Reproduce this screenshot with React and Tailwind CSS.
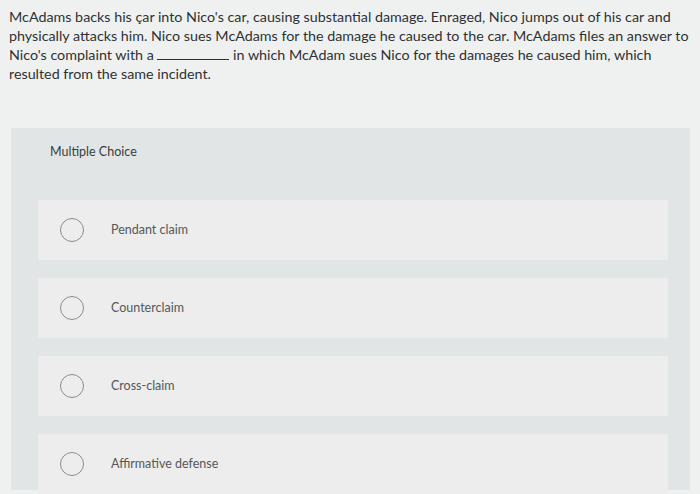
const options = ['Pendant claim', 'Counterclaim', 'Cross-claim', 'Affirmative defense']

export default function App() {
  return (
    <div className="w-[700px] h-[494px] overflow-hidden bg-[#eff1f0] font-['Lato',sans-serif]">
      <div className="pl-[9px] pt-[7px] pb-[45px] text-[14.3px] leading-[19px] text-[#2e3133]">
        <p className="whitespace-nowrap">McAdams backs his çar into Nico's car, causing substantial damage. Enraged, Nico jumps out of his car and</p>
        <p className="whitespace-nowrap">physically attacks him. Nico sues McAdams for the damage he caused to the car. McAdams files an answer to</p>
        <p className="whitespace-nowrap">
          Nico's complaint with a <span className="inline-block w-[72px] border-b border-[#2e3133] align-baseline"></span> in which McAdam sues Nico for the damages he caused him, which
        </p>
        <p className="whitespace-nowrap">resulted from the same incident.</p>
      </div>
      <div className="ml-[11px] w-[679px] h-[362px] bg-[#e2e5e5] pt-[15px]">
        <div className="pl-[39px] text-[12.5px] text-[#3a3d40] h-[57px]">Multiple Choice</div>
        <div className="flex flex-col gap-[18px] pl-[27px] pr-[22px]">
          {options.map(o => (
            <div key={o} className="h-[60px] bg-[#ecedec] flex items-center pl-[22px]">
              <span className="w-[24px] h-[24px] rounded-full border border-[#8a8d90] shrink-0" />
              <span className="ml-[27px] text-[12.5px] text-[#55585b]">{o}</span>
            </div>
          ))}
        </div>
      </div>
    </div>
  )
}
